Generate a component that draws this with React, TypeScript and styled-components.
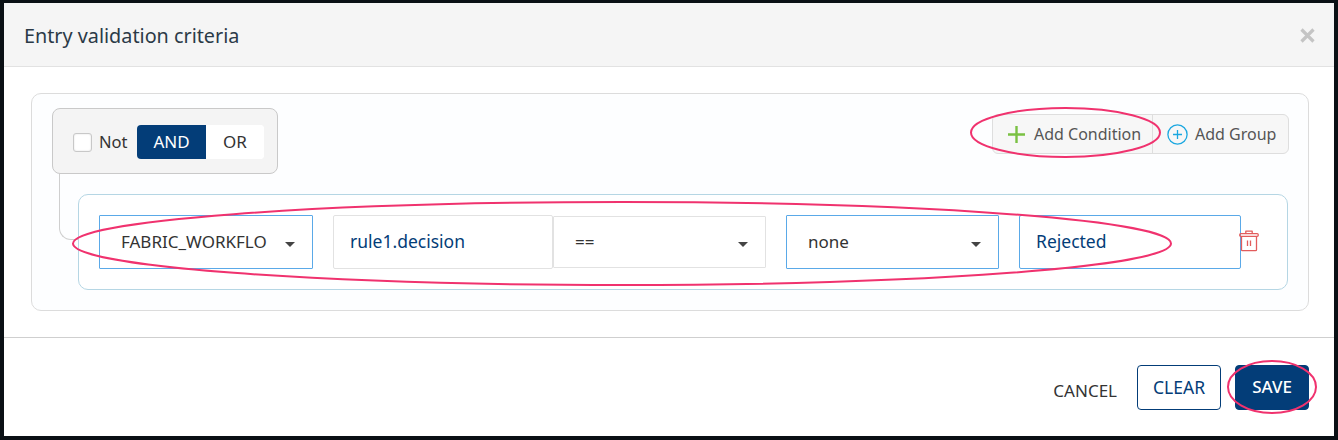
import React from "react";
import styled, { createGlobalStyle } from "styled-components";

const Global = createGlobalStyle`
  html, body { margin: 0; padding: 0; background: #0b1116; }
  body { width: 1338px; height: 440px; overflow: hidden; font-family: "Noto Sans", "Open Sans", sans-serif; }
  * { box-sizing: border-box; }
`;

const Page = styled.div`
  position: relative;
  width: 1338px;
  height: 440px;
  padding: 3px 4px 4px 4px;
  background: #0a1015;
`;
const Modal = styled.div`
  display: flex;
  flex-direction: column;
  height: 433px;
  background: #fff;
`;
const Header = styled.header`
  height: 64px;
  flex: none;
  display: flex;
  align-items: center;
  justify-content: space-between;
  padding: 1px 19px 0 20px;
  background: #f5f5f5;
  border-bottom: 1px solid #e2e2e2;
`;
const Title = styled.h1`
  margin: 0;
  font-size: 19.8px;
  font-weight: 400;
  color: #2b3a47;
`;
const Close = styled.span`
  display: flex;
  width: 15px;
  height: 15px;
  color: #c4c4c4;
`;
const Body = styled.main`
  height: 271px;
  flex: none;
  padding: 26px 25px 0 27px;
  border-bottom: 1px solid #cfcfcf;
`;
const Group = styled.section`
  position: relative;
  height: 218px;
  padding: 14px 19px 0 20px;
  background: #fdfeff;
  border: 1px solid #dcdcdc;
  border-radius: 10px;
`;
const GroupHead = styled.div`
  display: flex;
  justify-content: space-between;
  align-items: flex-start;
`;
const Combinator = styled.div`
  display: flex;
  align-items: center;
  width: 226px;
  height: 66px;
  padding: 1px 12px 0 20px;
  background: #f4f4f4;
  border: 1px solid #c9c9c9;
  border-radius: 8px;
`;
const Check = styled.span`
  flex: none;
  width: 19px;
  height: 19px;
  margin-top: 2px;
  background: #fff;
  border: 1px solid #c8c8c8;
  border-radius: 3px;
  box-shadow: inset 0 0 2px #ddd;
`;
const NotLabel = styled.span`
  flex: none;
  margin-left: 7px;
  width: 38px;
  font-size: 16.5px;
  color: #333;
`;
const Toggle = styled.div`
  display: flex;
  flex: none;
  height: 34px;
  border-radius: 4px;
  overflow: hidden;
  background: #fff;
`;
const ToggleItem = styled.span<{ $on?: boolean }>`
  display: flex;
  align-items: center;
  justify-content: center;
  width: ${(p) => (p.$on ? "69px" : "58px")};
  font-size: 17px;
  color: ${(p) => (p.$on ? "#fff" : "#333")};
  background: ${(p) => (p.$on ? "#033d78" : "#fff")};
`;
const Actions = styled.div`
  display: flex;
  width: 297px;
  height: 40px;
  margin-top: 6px;
  background: #f7f7f7;
  border: 1px solid #dedede;
  border-radius: 6px;
`;
const ActionBtn = styled.span<{ $first?: boolean }>`
  display: flex;
  align-items: center;
  flex: none;
  width: ${(p) => (p.$first ? "160px" : "136px")};
  padding-left: 14px;
  gap: ${(p) => (p.$first ? "8px" : "7px")};
  font-size: 16px;
  color: #555;
  border-right: ${(p) => (p.$first ? "1px solid #dedede" : "none")};
`;
const Connector = styled.span`
  position: absolute;
  left: 27px;
  top: 80px;
  width: 20px;
  height: 66px;
  border-left: 1px solid #cfcfcf;
  border-bottom: 1px solid #cfcfcf;
  border-bottom-left-radius: 12px;
`;
const Rule = styled.div`
  display: flex;
  align-items: center;
  height: 96px;
  margin: 20px 1px 0 26px;
  padding: 0 0 0 20px;
  background: #fff;
  border: 1px solid #b5d6e4;
  border-radius: 10px;
`;
const Select = styled.div<{ $w: number; $active?: boolean; $ml?: number; $h?: number }>`
  display: flex;
  align-items: center;
  justify-content: space-between;
  flex: none;
  width: ${(p) => p.$w}px;
  height: ${(p) => p.$h ?? 54}px;
  margin-left: ${(p) => p.$ml ?? 0}px;
  padding: 0 17px 2px 21px;
  font-size: 17px;
  color: #333;
  background: #fff;
  border: 1px solid ${(p) => (p.$active ? "#5aa9e8" : "#e2e2e2")};
  border-radius: 1px;
`;
const TextInput = styled.div<{ $w: number; $active?: boolean; $ml: number }>`
  display: flex;
  align-items: center;
  flex: none;
  width: ${(p) => p.$w}px;
  height: 54px;
  margin-left: ${(p) => p.$ml}px;
  padding: 0 0 2px 16px;
  font-size: 17.5px;
  color: #033d78;
  background: #fff;
  border: 1px solid ${(p) => (p.$active ? "#5aa9e8" : "#e2e2e2")};
  border-radius: 2px;
`;
const Caret = styled.span`
  width: 0;
  height: 0;
  margin-top: 7px;
  border-left: 5.5px solid transparent;
  border-right: 5.5px solid transparent;
  border-top: 5.5px solid #444;
`;
const Trash = styled.span`
  display: flex;
  margin: 0 0 2px -2px;
  color: #e25c5c;
`;
const Footer = styled.footer`
  flex: 1;
  display: flex;
  align-items: center;
  justify-content: flex-end;
  padding: 1px 25px 0 0;
`;
const Cancel = styled.span`
  margin: 6px 20px 0 0;
  font-size: 17px;
  color: #333;
`;
const Clear = styled.span`
  display: flex;
  align-items: center;
  justify-content: center;
  width: 84px;
  height: 45px;
  margin-right: 14px;
  padding-bottom: 2px;
  font-size: 17.5px;
  font-weight: 400;
  color: #033d78;
  background: #fff;
  border: 1px solid #033d78;
  border-radius: 4px;
`;
const Save = styled(Clear)`
  width: 74px;
  margin-right: 0;
  font-size: 17px;
  font-weight: 500;
  color: #fff;
  background: #033d78;
`;
const Marks = styled.svg`
  position: absolute;
  inset: 0;
  pointer-events: none;
`;

export default function App() {
  return (
    <Page>
      <Global />
      <Modal>
        <Header>
          <Title>Entry validation criteria</Title>
          <Close>
            <svg width="15" height="15" viewBox="0 0 15 15" fill="none" stroke="currentColor" strokeWidth="3.2">
              <path d="M1.5 1.5l12 12M13.5 1.5l-12 12" />
            </svg>
          </Close>
        </Header>
        <Body>
          <Group>
            <GroupHead>
              <Combinator>
                <Check />
                <NotLabel>Not</NotLabel>
                <Toggle>
                  <ToggleItem $on>AND</ToggleItem>
                  <ToggleItem>OR</ToggleItem>
                </Toggle>
              </Combinator>
              <Actions>
                <ActionBtn $first>
                  <svg width="19" height="19" viewBox="0 0 19 19" fill="none" stroke="#7ac143" strokeWidth="2.4">
                    <path d="M9.5 1v17M1 9.5h17" />
                  </svg>
                  Add Condition
                </ActionBtn>
                <ActionBtn>
                  <svg width="21" height="21" viewBox="0 0 21 21" fill="none" stroke="#1aa7e0" strokeWidth="1.3">
                    <circle cx="10.5" cy="10.5" r="9.6" />
                    <path d="M10.5 6v9M6 10.5h9" />
                  </svg>
                  Add Group
                </ActionBtn>
              </Actions>
            </GroupHead>
            <Connector />
            <Rule>
              <Select $w={214} $active>
                FABRIC_WORKFLO
                <Caret />
              </Select>
              <TextInput $w={220} $ml={20}>rule1.decision</TextInput>
              <Select $w={213} $h={52}>
                ==
                <Caret />
              </Select>
              <Select $w={213} $ml={20} $active>
                none
                <Caret />
              </Select>
              <TextInput $w={222} $ml={20} $active>Rejected</TextInput>
              <Trash>
                <svg width="20" height="22" viewBox="0 0 20 22" fill="none" stroke="currentColor" strokeWidth="1.3" strokeLinejoin="round">
                  <rect x="0.7" y="3.7" width="18.6" height="2.6" rx="1.2" />
                  <path d="M6.8 3.7V1.2h6.4v2.5" />
                  <path d="M2.5 6.3v13.4a1 1 0 0 0 1 1h13a1 1 0 0 0 1-1V6.3" />
                  <path d="M8.5 10.5v5.5M11.5 10.5v5.5" />
                </svg>
              </Trash>
            </Rule>
          </Group>
        </Body>
        <Footer>
          <Cancel>CANCEL</Cancel>
          <Clear>CLEAR</Clear>
          <Save>SAVE</Save>
        </Footer>
      </Modal>
      <Marks width="1338" height="440" viewBox="0 0 1338 440" fill="none" stroke="#f0326e" strokeWidth="2">
        <ellipse cx="1065.5" cy="132.5" rx="94.5" ry="24.5" />
        <ellipse cx="622" cy="243.5" rx="549" ry="41.5" />
        <ellipse cx="1272" cy="387" rx="44" ry="26" />
      </Marks>
    </Page>
  );
}
